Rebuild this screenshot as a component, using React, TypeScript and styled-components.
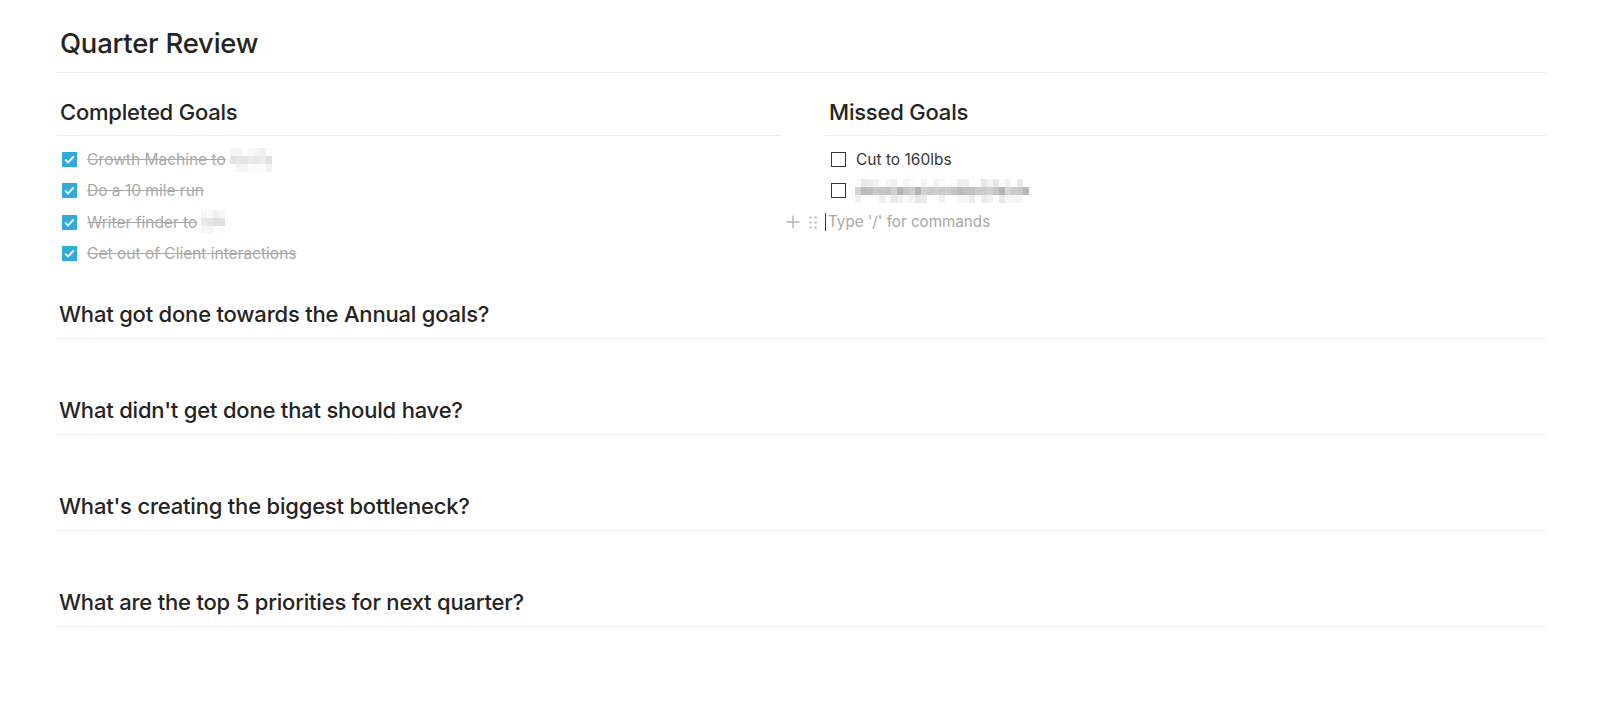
import React from "react";
import styled, { createGlobalStyle } from "styled-components";

const GlobalStyle = createGlobalStyle`
    body {
        margin: 0;
        background: #ffffff;
        font-family: Inter, "Noto Sans", sans-serif;
        color: #252422;
    }
`;

const Page = styled.div`
    width: 1490px;
    padding-left: 56px;
    padding-bottom: 80px;
`;

const Title = styled.h1`
    margin: 0;
    padding: 26px 4px 12px;
    font-size: 27.4px;
    line-height: 34px;
    font-weight: 500;
    letter-spacing: -0.2px;
    border-bottom: 1px solid #ededec;
`;

const Columns = styled.div`
    display: grid;
    grid-template-columns: 724px 721px;
    column-gap: 45px;
`;

const Column = styled.div`
    display: flex;
    flex-direction: column;
`;

const SubHeading = styled.h2`
    margin: 25px 0 0;
    padding: 0 4px 9px;
    font-size: 22px;
    line-height: 28px;
    font-weight: 500;
    letter-spacing: -0.2px;
    border-bottom: 1px solid #ededec;
`;

const TodoList = styled.div`
    display: flex;
    flex-direction: column;
    padding-top: 8px;
`;

const TodoRow = styled.div`
    position: relative;
    display: flex;
    align-items: center;
    gap: 10px;
    height: 31.3px;
    padding-left: 6px;
    font-size: 15.5px;
`;

const Box = styled.span<{ $checked?: boolean }>`
    display: inline-flex;
    align-items: center;
    justify-content: center;
    flex: none;
    width: 15px;
    height: 15px;
    box-sizing: border-box;
    background: ${(p) => (p.$checked ? "#2eaadc" : "#ffffff")};
    border: ${(p) => (p.$checked ? "none" : "1.5px solid #37352f")};
`;

const TodoText = styled.span<{ $done?: boolean }>`
    display: inline-flex;
    align-items: center;
    color: ${(p) => (p.$done ? "#a9a8a5" : "#37352f")};
    text-decoration: ${(p) => (p.$done ? "line-through" : "none")};
    text-decoration-color: #a9a8a5;
    white-space: nowrap;
`;

const Mosaic = styled.span<{ $inline?: boolean }>`
    display: inline-grid;
    grid-auto-flow: column;
    grid-template-rows: repeat(3, 8px);
    margin-left: ${(p) => (p.$inline ? "4px" : "-1px")};
`;

const Handle = styled.div`
    position: absolute;
    left: -39px;
    top: 0;
    height: 31px;
    display: flex;
    align-items: center;
    gap: 9px;
`;

const Placeholder = styled.span`
    border-left: 1px solid #37352f;
    padding-left: 2px;
    margin-left: -6px;
    font-size: 15.2px;
    line-height: 18px;
    color: #a9a8a5;
`;

const Questions = styled.div`
    display: flex;
    flex-direction: column;
    gap: 56px;
    margin-top: 30px;
`;

const Question = styled.h3`
    margin: 0;
    padding: 0 3px 9px;
    font-size: 22px;
    line-height: 30px;
    font-weight: 500;
    letter-spacing: -0.2px;
    border-bottom: 1px solid #ededec;
`;

const Check = () => (
    <svg width="11" height="9" viewBox="0 0 11 9">
        <path d="M1.2 4.6 L4.1 7.4 L9.8 1.4" fill="none" stroke="#fff" strokeWidth="1.9" />
    </svg>
);

const Plus = () => (
    <svg width="14" height="14" viewBox="0 0 14 14">
        <path d="M7 0.5 V13.5 M0.5 7 H13.5" stroke="#b5b4b1" strokeWidth="1.4" />
    </svg>
);

const Dots = () => (
    <svg width="8" height="13" viewBox="0 0 8 13">
        {[1.5, 6.5].map((x) =>
            [1.5, 6.5, 11.5].map((y) => <circle key={`${x}-${y}`} cx={x} cy={y} r="1.3" fill="#c3c2bf" />)
        )}
    </svg>
);

// pixelated redaction, shades made up from a seed
const Redacted = ({ cols, seed, light }: { cols: number; seed: number; light?: boolean }) => {
    const cells = [];
    let s = seed;
    for (let c = 0; c < cols; c++) {
        for (let r = 0; r < 3; r++) {
            s = (s * 9301 + 49297) % 233280;
            const rnd = s / 233280;
            const base = r === 1 ? (light ? 222 : 180) : light ? 240 : 230;
            const v = Math.round(base + rnd * (light ? 14 : 34));
            cells.push(<span key={`${c}-${r}`} style={{ width: 6, background: `rgb(${v},${v},${v})` }} />);
        }
    }
    return <Mosaic $inline={light}>{cells}</Mosaic>;
};

const completed = [
    { text: "Growth Machine to", hidden: 7 },
    { text: "Do a 10 mile run", hidden: 0 },
    { text: "Writer finder to", hidden: 4 },
    { text: "Get out of Client interactions", hidden: 0 },
];

const questions = [
    "What got done towards the Annual goals?",
    "What didn't get done that should have?",
    "What's creating the biggest bottleneck?",
    "What are the top 5 priorities for next quarter?",
];

const App = () => {
    return (
        <Page>
            <GlobalStyle />
            <Title>Quarter Review</Title>
            <Columns>
                <Column>
                    <SubHeading>Completed Goals</SubHeading>
                    <TodoList>
                        {completed.map((item, i) => (
                            <TodoRow key={item.text}>
                                <Box $checked>
                                    <Check />
                                </Box>
                                <TodoText $done>
                                    {item.text}
                                    {item.hidden > 0 && <Redacted cols={item.hidden} seed={i + 3} light />}
                                </TodoText>
                            </TodoRow>
                        ))}
                    </TodoList>
                </Column>
                <Column>
                    <SubHeading>Missed Goals</SubHeading>
                    <TodoList>
                        <TodoRow>
                            <Box />
                            <TodoText>Cut to 160lbs</TodoText>
                        </TodoRow>
                        <TodoRow>
                            <Box />
                            <Redacted cols={29} seed={11} />
                        </TodoRow>
                        <TodoRow>
                            <Handle>
                                <Plus />
                                <Dots />
                            </Handle>
                            <Placeholder>Type '/' for commands</Placeholder>
                        </TodoRow>
                    </TodoList>
                </Column>
            </Columns>
            <Questions>
                {questions.map((q) => (
                    <Question key={q}>{q}</Question>
                ))}
            </Questions>
        </Page>
    );
};

export default App;
